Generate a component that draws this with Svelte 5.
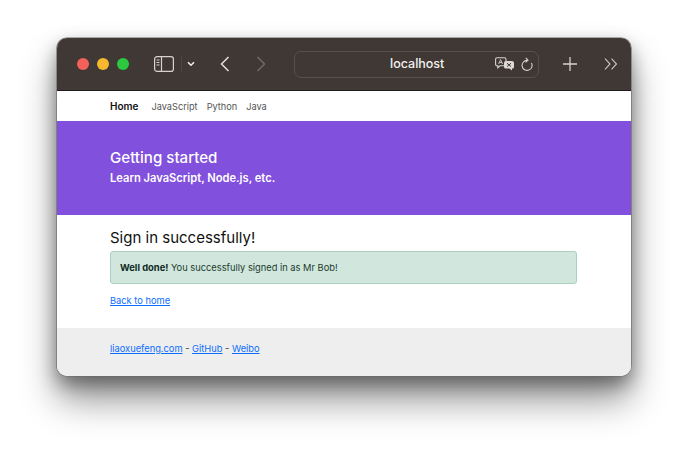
<script>
  const menu = [
    { label: 'Home', active: true },
    { label: 'JavaScript' },
    { label: 'Python' },
    { label: 'Java' }
  ]
</script>

<div class="page">
  <div class="window">
    <header class="toolbar">
      <div class="lights">
        <span class="light red"></span>
        <span class="light yellow"></span>
        <span class="light green"></span>
      </div>
      <svg class="sidebar-icon" width="20" height="16" viewBox="0 0 20 16" fill="none" stroke="#d6d3d0" stroke-width="1.2">
        <rect x="0.6" y="0.6" width="18.8" height="14.8" rx="2.5" />
        <path d="M7.5 0.6V15.4" />
        <path d="M2.5 4H5.5M2.5 6.5H5.5M2.5 9H5.5" stroke-width="1.1" />
      </svg>
      <span class="divider"></span>
      <svg class="chevron" width="8" height="6" viewBox="0 0 8 6" fill="none" stroke="#eeeeee" stroke-width="1.6">
        <path d="M1 1.2L4 4.2L7 1.2" />
      </svg>
      <svg class="back" width="10" height="16" viewBox="0 0 10 16" fill="none" stroke="#e4e2e0" stroke-width="1.5">
        <path d="M8.5 1L1.5 8L8.5 15" />
      </svg>
      <svg class="forward" width="10" height="16" viewBox="0 0 10 16" fill="none" stroke="#6f6a67" stroke-width="1.5">
        <path d="M1.5 1L8.5 8L1.5 15" />
      </svg>
      <div class="address">
        <span class="host">localhost</span>
        <svg class="translate" width="20" height="14" viewBox="0 0 20 14">
          <path d="M2 0.7H9.5Q11 0.7 11 2.2V7.3Q11 8.8 9.5 8.8H5L2.8 10.8V8.8H2Q0.6 8.8 0.6 7.3V2.2Q0.6 0.7 2 0.7Z" fill="#3f3835" stroke="#d6d3d0" stroke-width="1.1" />
          <path d="M3.6 7L5.6 2.6L7.6 7M4.4 5.5H6.8" fill="none" stroke="#d6d3d0" stroke-width="0.9" />
          <path d="M11 4H17Q19 4 19 6V10Q19 11.5 17.5 11.5H17V13.5L14.5 11.5H11Q9 11.5 9 10V6Q9 4 11 4Z" fill="#dcd9d7" />
          <path d="M12 6.2L16 9.6M16 6.2L12 9.6" stroke="#3f3835" stroke-width="1" />
        </svg>
        <svg class="reload" width="12" height="15" viewBox="0 0 12 15" fill="none" stroke="#d6d3d0" stroke-width="1.1">
          <path d="M6 3.4A5 5 0 1 0 10.4 5.9" />
          <path d="M4.8 0.8L7 3.3L4.6 5.3" />
        </svg>
      </div>
      <svg class="plus" width="14" height="14" viewBox="0 0 14 14" stroke="#d6d3d0" stroke-width="1.3">
        <path d="M7 0V14M0 7H14" />
      </svg>
      <svg class="more" width="14" height="12" viewBox="0 0 14 12" fill="none" stroke="#c9c6c3" stroke-width="1.1">
        <path d="M1 0.7L6 6L1 11.3M7.5 0.7L12.5 6L7.5 11.3" />
      </svg>
    </header>

    <nav class="nav">
      {#each menu as item}
        <a href="#top" class:active={item.active}>{item.label}</a>
      {/each}
    </nav>

    <section class="hero">
      <h1>Getting started</h1>
      <p>Learn JavaScript, Node.js, etc.</p>
    </section>

    <main class="content">
      <h2>Sign in successfully!</h2>
      <div class="alert"><strong>Well done!</strong> You successfully signed in as Mr Bob!</div>
      <a class="home" href="#top">Back to home</a>
    </main>

    <footer class="footer">
      <a href="#top">liaoxuefeng.com</a> - <a href="#top">GitHub</a> - <a href="#top">Weibo</a>
    </footer>
  </div>
</div>

<style>
  :global(body) {
    margin: 0;
    background: #fff;
    font-family: Inter, "Liberation Sans", sans-serif;
  }

  .page {
    height: 450px;
    box-sizing: border-box;
    padding: 38px 0 0 57px;
    overflow: hidden;
  }

  .window {
    width: 574px;
    height: 338px;
    box-sizing: border-box;
    border-radius: 10px;
    overflow: hidden;
    display: flex;
    flex-direction: column;
    background: #fff;
    box-shadow: 0 0 0 0.6px #6b6b6b, 0 24px 36px rgba(0, 0, 0, 0.42), 0 8px 18px rgba(0, 0, 0, 0.38);
  }

  .toolbar {
    height: 52px;
    flex: none;
    display: flex;
    align-items: center;
    background: #3f3835;
    border-bottom: 1px solid #1f1c1b;
  }

  .lights {
    display: flex;
    gap: 7.5px;
    margin-left: 19.5px;
  }

  .light {
    width: 12.5px;
    height: 12.5px;
    border-radius: 50%;
  }

  .red { background: #f4605a; }
  .yellow { background: #f5b82e; }
  .green { background: #2bc840; }

  .sidebar-icon { margin-left: 25px; }

  .divider {
    width: 1px;
    height: 17px;
    margin-left: 7px;
    background: #4d4744;
  }

  .chevron { margin-left: 5px; }
  .back { margin-left: 25px; }
  .forward { margin-left: 26px; }

  .address {
    width: 245px;
    height: 27px;
    margin-left: 28px;
    box-sizing: border-box;
    border: 1px solid #57514e;
    border-radius: 7px;
    position: relative;
    display: flex;
    align-items: center;
    justify-content: flex-end;
    gap: 6px;
    padding-right: 5px;
  }

  .host {
    position: absolute;
    left: 95px;
    top: 4.5px;
    color: #f2f0ee;
    font-size: 12.5px;
    line-height: 16px;
    font-weight: 500;
  }

  .plus { margin-left: 24px; }
  .more { margin-left: 27px; }

  .nav {
    height: 30px;
    flex: none;
    display: flex;
    align-items: center;
    gap: 9px;
    padding-left: 53px;
    font-size: 9.2px;
  }

  .nav a {
    color: #555;
    text-decoration: none;
  }

  .nav a.active {
    margin-right: 4px;
    color: #111;
    font-size: 10px;
    font-weight: 600;
  }

  .hero {
    height: 94px;
    flex: none;
    box-sizing: border-box;
    padding: 27px 0 0 53px;
    background: #8150dc;
    color: #fff;
  }

  .hero h1 {
    margin: 0;
    font-size: 15.1px;
    line-height: 19px;
    font-weight: 500;
  }

  .hero p {
    margin: 3.5px 0 0;
    font-size: 11.15px;
    line-height: 14px;
    font-weight: 600;
  }

  .content {
    flex: 1;
    padding: 13px 53px 0;
  }

  .content h2 {
    margin: 0;
    font-size: 15px;
    line-height: 20px;
    font-weight: 400;
    color: #111;
  }

  .alert {
    width: 467px;
    height: 33px;
    margin-top: 3px;
    box-sizing: border-box;
    padding-left: 9px;
    display: flex;
    align-items: center;
    white-space: pre;
    background: #d1e7dd;
    border: 1px solid #a8d2bf;
    border-radius: 3px;
    color: #1b3a2c;
    font-size: 9.3px;
  }

  .alert strong {
    color: #0f2a1f;
    font-size: 9.4px;
    font-weight: 700;
  }

  .home {
    display: inline-block;
    margin-top: 11px;
    color: #0d6efd;
    font-size: 9.3px;
    line-height: 12px;
  }

  .footer {
    height: 48px;
    flex: none;
    box-sizing: border-box;
    padding: 15px 0 0 53px;
    background: #eeeeee;
    color: #333;
    font-size: 9.3px;
    line-height: 12px;
  }

  .footer a { color: #0d6efd; }
</style>
